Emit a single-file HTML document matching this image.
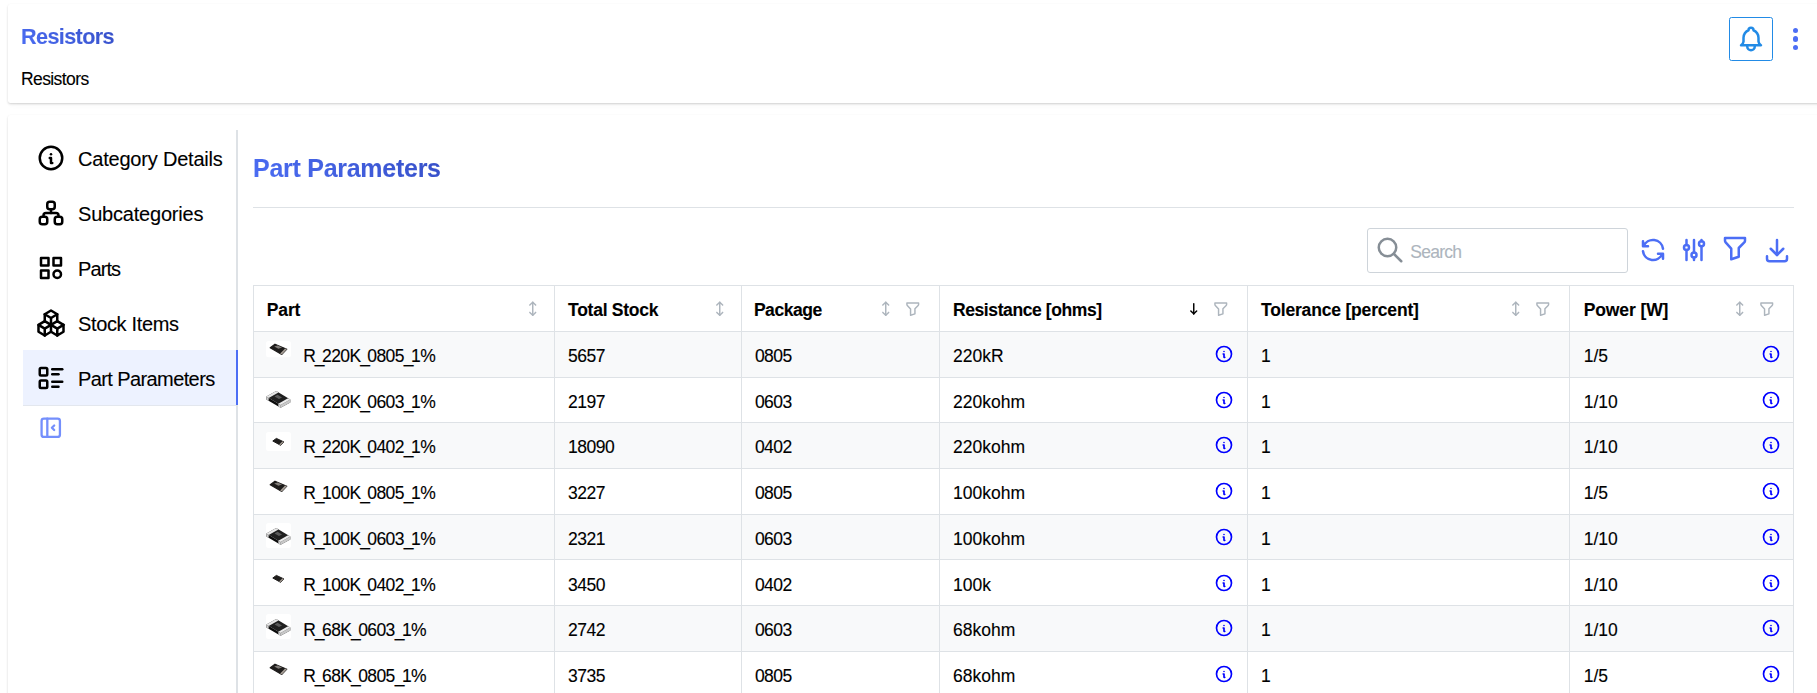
<!DOCTYPE html>
<html><head><meta charset="utf-8">
<style>
html,body{margin:0;padding:0;background:#fff;width:1817px;height:693px;overflow:hidden;}
body{font-family:"Liberation Sans",sans-serif;color:#000;position:relative;}
.a{position:absolute;}
.t{position:absolute;white-space:nowrap;line-height:1;-webkit-text-stroke-width:0.12px;}
.card{position:absolute;background:#fff;border-radius:2.5px;box-shadow:0 1px 3px rgba(0,0,0,.07),0 1px 2px rgba(0,0,0,.1),0 4px 6px -2px rgba(0,0,0,.035);}
.grad{background-image:linear-gradient(45deg,#4c6ef5,#364fc7);-webkit-background-clip:text;background-clip:text;color:transparent;}
svg{position:absolute;overflow:visible;}
.nav{font-size:20px;letter-spacing:-0.2px;}
.hline{position:absolute;background:#dee2e6;}
.th{font-weight:700;font-size:17.5px;}
.td{font-size:17.5px;}
</style></head>
<body>
<!-- header card -->
<div class="card" style="left:7.5px;top:3.5px;width:1850px;height:99.5px;"></div>
<div class="t grad" style="left:21px;top:25.5px;font-size:21.6px;font-weight:700;letter-spacing:-0.6px;padding-bottom:4px">Resistors</div>
<div class="t" style="left:21px;top:70.8px;font-size:17.5px;letter-spacing:-0.6px">Resistors</div>

<!-- bell -->
<div class="a" style="left:1729px;top:17px;width:42px;height:42px;border:1.25px solid #228be6;border-radius:2.5px;"></div>
<svg style="left:1736px;top:24px" width="30" height="30" viewBox="0 0 24 24" fill="none" stroke="#228be6" stroke-width="2" stroke-linecap="round" stroke-linejoin="round"><path d="M10 5a2 2 0 1 1 4 0a7 7 0 0 1 4 6v3a4 4 0 0 0 2 3h-16a4 4 0 0 0 2 -3v-3a7 7 0 0 1 4 -6"/><path d="M9 17v1a3 3 0 0 0 6 0v-1"/></svg>
<!-- dots -->
<div class="a" style="left:1793.1px;top:27.8px;width:5.2px;height:5.2px;border-radius:50%;background:#4c6ef5"></div>
<div class="a" style="left:1793.1px;top:36.4px;width:5.2px;height:5.2px;border-radius:50%;background:#4c6ef5"></div>
<div class="a" style="left:1793.1px;top:45.1px;width:5.2px;height:5.2px;border-radius:50%;background:#4c6ef5"></div>

<!-- main card -->
<div class="card" style="left:7.5px;top:115px;width:1850px;height:700px;"></div>

<!-- sidebar divider -->
<div class="hline" style="left:236px;top:130px;width:2px;height:600px;"></div>
<!-- active tab -->
<div class="a" style="left:23px;top:350px;width:213px;height:55px;background:#edf2ff;"></div>
<div class="a" style="left:236px;top:350px;width:2px;height:55px;background:#4c6ef5;"></div>
<div class="a" style="left:23px;top:405px;width:213px;height:1px;background:#e3e7ee;"></div>

<!-- nav icons -->
<svg style="left:35.75px;top:143px" width="30" height="30" viewBox="0 0 24 24" fill="none" stroke="#000" stroke-width="2" stroke-linecap="round" stroke-linejoin="round"><path d="M3 12a9 9 0 1 0 18 0a9 9 0 0 0 -18 0"/><path d="M12 9h.01"/><path d="M11 12h1v4h1"/></svg>
<svg style="left:35.75px;top:198px" width="30" height="30" viewBox="0 0 24 24" fill="none" stroke="#000" stroke-width="2" stroke-linecap="round" stroke-linejoin="round"><path d="M3 15m0 2a2 2 0 0 1 2 -2h2a2 2 0 0 1 2 2v2a2 2 0 0 1 -2 2h-2a2 2 0 0 1 -2 -2z"/><path d="M15 15m0 2a2 2 0 0 1 2 -2h2a2 2 0 0 1 2 2v2a2 2 0 0 1 -2 2h-2a2 2 0 0 1 -2 -2z"/><path d="M9 3m0 2a2 2 0 0 1 2 -2h2a2 2 0 0 1 2 2v2a2 2 0 0 1 -2 2h-2a2 2 0 0 1 -2 -2z"/><path d="M6 15v-1a2 2 0 0 1 2 -2h8a2 2 0 0 1 2 2v1"/><path d="M12 9l0 3"/></svg>
<svg style="left:35.75px;top:253px" width="30" height="30" viewBox="0 0 24 24" fill="none" stroke="#000" stroke-width="2" stroke-linecap="round" stroke-linejoin="round"><path d="M4 4h6v6h-6z"/><path d="M14 4h6v6h-6z"/><path d="M4 14h6v6h-6z"/><path d="M17 17m-3 0a3 3 0 1 0 6 0a3 3 0 1 0 -6 0"/></svg>
<svg style="left:35.75px;top:308px" width="30" height="30" viewBox="0 0 24 24" fill="none" stroke="#000" stroke-width="2" stroke-linecap="round" stroke-linejoin="round"><path d="M7 16.5l-5 -3l5 -3l5 3v5.5l-5 3z"/><path d="M2 13.5v5.5l5 3"/><path d="M7 16.545l5 -3.03"/><path d="M17 16.5l-5 -3l5 -3l5 3v5.5l-5 3z"/><path d="M12 19l5 3"/><path d="M17 16.5l5 -3"/><path d="M12 13.5v-5.5l-5 -3l5 -3l5 3v5.5"/><path d="M7 5.03v5.455"/><path d="M12 8l5 -3"/></svg>
<svg style="left:35.75px;top:363px" width="30" height="30" viewBox="0 0 24 24" fill="none" stroke="#000" stroke-width="2" stroke-linecap="round" stroke-linejoin="round"><path d="M13 5h8"/><path d="M13 9h5"/><path d="M13 15h8"/><path d="M13 19h5"/><path d="M3 4m0 1a1 1 0 0 1 1 -1h4a1 1 0 0 1 1 1v4a1 1 0 0 1 -1 1h-4a1 1 0 0 1 -1 -1z"/><path d="M3 14m0 1a1 1 0 0 1 1 -1h4a1 1 0 0 1 1 1v4a1 1 0 0 1 -1 1h-4a1 1 0 0 1 -1 -1z"/></svg>
<!-- collapse icon -->
<svg style="left:37.35px;top:414px" width="27.5" height="27.5" viewBox="0 0 24 24" fill="none" stroke="#748ffc" stroke-width="2" stroke-linecap="round" stroke-linejoin="round"><path d="M4 4m0 2a2 2 0 0 1 2 -2h12a2 2 0 0 1 2 2v12a2 2 0 0 1 -2 2h-12a2 2 0 0 1 -2 -2z"/><path d="M9 4v16"/><path d="M15 10l-2 2l2 2"/></svg>

<div class="t nav" style="left:78px;top:149px">Category Details</div>
<div class="t nav" style="left:78px;top:204px">Subcategories</div>
<div class="t nav" style="left:78px;top:259px;letter-spacing:-0.9px">Parts</div>
<div class="t nav" style="left:78px;top:314px;letter-spacing:-0.35px">Stock Items</div>
<div class="t nav" style="left:78px;top:369px;letter-spacing:-0.6px">Part Parameters</div>

<!-- panel heading -->
<div class="t grad" style="left:253px;top:155.5px;font-size:25px;font-weight:700;padding-bottom:5px;letter-spacing:-0.27px">Part Parameters</div>
<div class="hline" style="left:253px;top:207px;width:1541px;height:1.25px;"></div>

<!-- toolbar -->
<div class="a" style="left:1367px;top:228px;width:259px;height:42.7px;border:1.25px solid #ced4da;border-radius:3px;"></div>
<svg style="left:1375px;top:235px" width="30" height="30" viewBox="0 0 24 24" fill="none" stroke="#868e96" stroke-width="2" stroke-linecap="round" stroke-linejoin="round"><path d="M10 10m-7 0a7 7 0 1 0 14 0a7 7 0 1 0 -14 0"/><path d="M21 21l-6 -6"/></svg>
<div class="t" style="left:1410.3px;top:243.7px;font-size:17.5px;color:#adb5bd;letter-spacing:-0.75px">Search</div>

<svg style="left:1638px;top:235px" width="30" height="30" viewBox="0 0 24 24" fill="none" stroke="#4c6ef5" stroke-width="2" stroke-linecap="round" stroke-linejoin="round"><path d="M20 11a8.1 8.1 0 0 0 -15.5 -2m-.5 -4v4h4"/><path d="M4 13a8.1 8.1 0 0 0 15.5 2m.5 4v-4h-4"/></svg>
<svg style="left:1679px;top:235px" width="30" height="30" viewBox="0 0 24 24" fill="none" stroke="#4c6ef5" stroke-width="2" stroke-linecap="round" stroke-linejoin="round"><path d="M4 10a2 2 0 1 0 4 0a2 2 0 0 0 -4 0"/><path d="M6 4v4"/><path d="M6 12v8"/><path d="M10 16a2 2 0 1 0 4 0a2 2 0 0 0 -4 0"/><path d="M12 4v10"/><path d="M12 18v2"/><path d="M16 7a2 2 0 1 0 4 0a2 2 0 0 0 -4 0"/><path d="M18 4v1"/><path d="M18 9v11"/></svg>
<svg style="left:1720px;top:233.1px" width="30" height="30" viewBox="0 0 24 24" fill="none" stroke="#4c6ef5" stroke-width="2" stroke-linecap="round" stroke-linejoin="round"><path d="M4 4h16v2.172a2 2 0 0 1 -.586 1.414l-4.414 4.414v7l-6 2v-8.5l-4.48 -4.928a2 2 0 0 1 -.52 -1.345v-2.227z"/></svg>
<svg style="left:1762px;top:235px" width="30" height="30" viewBox="0 0 24 24" fill="none" stroke="#4c6ef5" stroke-width="2" stroke-linecap="round" stroke-linejoin="round"><path d="M4 17v2a2 2 0 0 0 2 2h12a2 2 0 0 0 2 -2v-2"/><path d="M7 11l5 5l5 -5"/><path d="M12 4l0 12"/></svg>

<!-- TABLE -->
<div class="a" style="left:254px;top:332px;width:1539px;height:45px;background:#f8f9fa"></div>
<div class="a" style="left:254px;top:423px;width:1539px;height:45px;background:#f8f9fa"></div>
<div class="a" style="left:254px;top:515px;width:1539px;height:44px;background:#f8f9fa"></div>
<div class="a" style="left:254px;top:606px;width:1539px;height:45px;background:#f8f9fa"></div>
<div class="hline" style="left:253px;top:285px;width:1541px;height:1px"></div>
<div class="hline" style="left:253px;top:331px;width:1541px;height:1px"></div>
<div class="hline" style="left:253px;top:377px;width:1541px;height:1px"></div>
<div class="hline" style="left:253px;top:422px;width:1541px;height:1px"></div>
<div class="hline" style="left:253px;top:468px;width:1541px;height:1px"></div>
<div class="hline" style="left:253px;top:514px;width:1541px;height:1px"></div>
<div class="hline" style="left:253px;top:559px;width:1541px;height:1px"></div>
<div class="hline" style="left:253px;top:605px;width:1541px;height:1px"></div>
<div class="hline" style="left:253px;top:651px;width:1541px;height:1px"></div>
<div class="hline" style="left:253px;top:285px;width:1px;height:420px"></div>
<div class="hline" style="left:554px;top:285px;width:1px;height:420px"></div>
<div class="hline" style="left:741px;top:285px;width:1px;height:420px"></div>
<div class="hline" style="left:939px;top:285px;width:1px;height:420px"></div>
<div class="hline" style="left:1247px;top:285px;width:1px;height:420px"></div>
<div class="hline" style="left:1569px;top:285px;width:1px;height:420px"></div>
<div class="hline" style="left:1793px;top:285px;width:1px;height:420px"></div>
<div class="t th" style="left:266.7px;top:302.09px;letter-spacing:-0.1px">Part</div>
<div class="t th" style="left:568px;top:302.09px;letter-spacing:-0.25px">Total Stock</div>
<div class="t th" style="left:753.9px;top:302.09px;letter-spacing:-0.44px">Package</div>
<div class="t th" style="left:953px;top:302.09px;letter-spacing:-0.41px">Resistance [ohms]</div>
<div class="t th" style="left:1261px;top:302.09px;letter-spacing:-0.18px">Tolerance [percent]</div>
<div class="t th" style="left:1583.7px;top:302.09px;letter-spacing:-0.1px">Power [W]</div>
<svg style="left:524.05px;top:299.65px" width="17.5" height="17.5" viewBox="0 0 24 24" fill="none" stroke="#adb5bd" stroke-width="2" stroke-linecap="round" stroke-linejoin="round"><path d="M8 7l4 -4l4 4"/><path d="M8 17l4 4l4 -4"/><path d="M12 3l0 18"/></svg>
<svg style="left:710.85px;top:299.65px" width="17.5" height="17.5" viewBox="0 0 24 24" fill="none" stroke="#adb5bd" stroke-width="2" stroke-linecap="round" stroke-linejoin="round"><path d="M8 7l4 -4l4 4"/><path d="M8 17l4 4l4 -4"/><path d="M12 3l0 18"/></svg>
<svg style="left:876.55px;top:299.65px" width="17.5" height="17.5" viewBox="0 0 24 24" fill="none" stroke="#adb5bd" stroke-width="2" stroke-linecap="round" stroke-linejoin="round"><path d="M8 7l4 -4l4 4"/><path d="M8 17l4 4l4 -4"/><path d="M12 3l0 18"/></svg>
<svg style="left:903.55px;top:299.65px" width="17.5" height="17.5" viewBox="0 0 24 24" fill="none" stroke="#adb5bd" stroke-width="2" stroke-linecap="round" stroke-linejoin="round"><path d="M4 4h16v2.172a2 2 0 0 1 -.586 1.414l-4.414 4.414v7l-6 2v-8.5l-4.48 -4.928a2 2 0 0 1 -.52 -1.345v-2.227z"/></svg>
<svg style="left:1184.85px;top:299.65px" width="17.5" height="17.5" viewBox="0 0 24 24" fill="none" stroke="#000" stroke-width="2" stroke-linecap="round" stroke-linejoin="round"><path d="M12 5l0 14"/><path d="M16 15l-4 4"/><path d="M8 15l4 4"/></svg>
<svg style="left:1211.85px;top:299.65px" width="17.5" height="17.5" viewBox="0 0 24 24" fill="none" stroke="#adb5bd" stroke-width="2" stroke-linecap="round" stroke-linejoin="round"><path d="M4 4h16v2.172a2 2 0 0 1 -.586 1.414l-4.414 4.414v7l-6 2v-8.5l-4.48 -4.928a2 2 0 0 1 -.52 -1.345v-2.227z"/></svg>
<svg style="left:1506.65px;top:299.65px" width="17.5" height="17.5" viewBox="0 0 24 24" fill="none" stroke="#adb5bd" stroke-width="2" stroke-linecap="round" stroke-linejoin="round"><path d="M8 7l4 -4l4 4"/><path d="M8 17l4 4l4 -4"/><path d="M12 3l0 18"/></svg>
<svg style="left:1533.65px;top:299.65px" width="17.5" height="17.5" viewBox="0 0 24 24" fill="none" stroke="#adb5bd" stroke-width="2" stroke-linecap="round" stroke-linejoin="round"><path d="M4 4h16v2.172a2 2 0 0 1 -.586 1.414l-4.414 4.414v7l-6 2v-8.5l-4.48 -4.928a2 2 0 0 1 -.52 -1.345v-2.227z"/></svg>
<svg style="left:1730.75px;top:299.65px" width="17.5" height="17.5" viewBox="0 0 24 24" fill="none" stroke="#adb5bd" stroke-width="2" stroke-linecap="round" stroke-linejoin="round"><path d="M8 7l4 -4l4 4"/><path d="M8 17l4 4l4 -4"/><path d="M12 3l0 18"/></svg>
<svg style="left:1757.75px;top:299.65px" width="17.5" height="17.5" viewBox="0 0 24 24" fill="none" stroke="#adb5bd" stroke-width="2" stroke-linecap="round" stroke-linejoin="round"><path d="M4 4h16v2.172a2 2 0 0 1 -.586 1.414l-4.414 4.414v7l-6 2v-8.5l-4.48 -4.928a2 2 0 0 1 -.52 -1.345v-2.227z"/></svg>
<svg style="left:262px;top:331px" width="34" height="46" viewBox="262 0 34 46"><rect x="266" y="10" width="25" height="16.3" rx="2.5" fill="#fff"/><g stroke-linejoin="round"><polygon points="270.20,16.80 275.00,13.20 286.80,18.20 281.80,23.40" fill="#1e1c1b" stroke="#1e1c1b" stroke-width="1.2"/><polygon points="285.15,17.50 286.80,18.20 281.80,23.40 280.18,22.48" fill="#a8a098"/><polygon points="274.20,15.60 277.80,14.60 282.00,16.60 278.40,17.80" fill="#807c78"/></g></svg>
<div class="t td" style="left:303.2px;top:347.89px"><span style="letter-spacing:-1.0px">R</span><span style="letter-spacing:-2.5px">_</span><span style="letter-spacing:-0.62px">2</span><span style="letter-spacing:-0.62px">2</span><span style="letter-spacing:-0.62px">0</span><span style="letter-spacing:-1.0px">K</span><span style="letter-spacing:-2.5px">_</span><span style="letter-spacing:-0.62px">0</span><span style="letter-spacing:-0.62px">8</span><span style="letter-spacing:-0.62px">0</span><span style="letter-spacing:-0.62px">5</span><span style="letter-spacing:-2.5px">_</span><span style="letter-spacing:-0.62px">1</span><span style="letter-spacing:-1.5px">%</span></div>
<div class="t td" style="left:568px;top:347.89px;letter-spacing:-0.5px">5657</div>
<div class="t td" style="left:754.9px;top:347.89px;letter-spacing:-0.5px">0805</div>
<div class="t td" style="left:953px;top:347.89px;letter-spacing:0px">220kR</div>
<div class="t td" style="left:1261px;top:347.89px;letter-spacing:0px">1</div>
<div class="t td" style="left:1583.7px;top:347.89px;letter-spacing:0px">1/5</div>
<svg style="left:1214.00px;top:343.80px" width="20" height="20" viewBox="0 0 24 24" fill="none" stroke="#0000ff" stroke-width="2" stroke-linecap="round" stroke-linejoin="round"><path d="M3 12a9 9 0 1 0 18 0a9 9 0 0 0 -18 0"/><path d="M12 9h.01"/><path d="M11 12h1v4h1"/></svg>
<svg style="left:1761.00px;top:343.80px" width="20" height="20" viewBox="0 0 24 24" fill="none" stroke="#0000ff" stroke-width="2" stroke-linecap="round" stroke-linejoin="round"><path d="M3 12a9 9 0 1 0 18 0a9 9 0 0 0 -18 0"/><path d="M12 9h.01"/><path d="M11 12h1v4h1"/></svg>
<svg style="left:262px;top:377px" width="34" height="46" viewBox="262 0 34 46"><polygon points="266.40,19.60 276.20,14.00 290.30,22.60 280.60,28.00" fill="#1f1f1f"/><polygon points="266.40,19.60 280.60,28.00 280.60,30.80 266.40,22.40" fill="#0c0c0c"/><polygon points="280.60,28.00 290.30,22.60 290.30,25.40 280.60,30.80" fill="#2a2a2a"/><polygon points="266.40,19.60 276.20,14.00 278.46,15.38 268.67,20.94" fill="#e6e6e6"/><polygon points="266.40,19.60 268.67,20.94 268.67,23.74 266.40,22.40" fill="#cfcfcf"/><polygon points="278.33,26.66 288.04,21.22 290.30,22.60 280.60,28.00" fill="#ececec"/><polygon points="278.33,26.66 280.60,28.00 280.60,30.80 278.33,29.46" fill="#d4d4d4"/><polygon points="280.60,28.00 290.30,22.60 290.30,25.40 280.60,30.80" fill="#c8c8c8"/><polygon points="274.50,19.40 277.50,17.80 282.00,20.50 279.00,22.10" fill="#5a5a5a"/></svg>
<div class="t td" style="left:303.2px;top:393.64px"><span style="letter-spacing:-1.0px">R</span><span style="letter-spacing:-2.5px">_</span><span style="letter-spacing:-0.62px">2</span><span style="letter-spacing:-0.62px">2</span><span style="letter-spacing:-0.62px">0</span><span style="letter-spacing:-1.0px">K</span><span style="letter-spacing:-2.5px">_</span><span style="letter-spacing:-0.62px">0</span><span style="letter-spacing:-0.62px">6</span><span style="letter-spacing:-0.62px">0</span><span style="letter-spacing:-0.62px">3</span><span style="letter-spacing:-2.5px">_</span><span style="letter-spacing:-0.62px">1</span><span style="letter-spacing:-1.5px">%</span></div>
<div class="t td" style="left:568px;top:393.64px;letter-spacing:-0.5px">2197</div>
<div class="t td" style="left:754.9px;top:393.64px;letter-spacing:-0.5px">0603</div>
<div class="t td" style="left:953px;top:393.64px;letter-spacing:0px">220kohm</div>
<div class="t td" style="left:1261px;top:393.64px;letter-spacing:0px">1</div>
<div class="t td" style="left:1583.7px;top:393.64px;letter-spacing:0px">1/10</div>
<svg style="left:1214.00px;top:389.55px" width="20" height="20" viewBox="0 0 24 24" fill="none" stroke="#0000ff" stroke-width="2" stroke-linecap="round" stroke-linejoin="round"><path d="M3 12a9 9 0 1 0 18 0a9 9 0 0 0 -18 0"/><path d="M12 9h.01"/><path d="M11 12h1v4h1"/></svg>
<svg style="left:1761.00px;top:389.55px" width="20" height="20" viewBox="0 0 24 24" fill="none" stroke="#0000ff" stroke-width="2" stroke-linecap="round" stroke-linejoin="round"><path d="M3 12a9 9 0 1 0 18 0a9 9 0 0 0 -18 0"/><path d="M12 9h.01"/><path d="M11 12h1v4h1"/></svg>
<svg style="left:262px;top:422px" width="34" height="46" viewBox="262 0 34 46"><rect x="266" y="10" width="25" height="19" rx="2.5" fill="#fff"/><polygon points="272.80,19.00 276.40,16.40 284.00,20.00 280.60,23.30" fill="#1e1c1b" stroke="#1e1c1b" stroke-width="1" stroke-linejoin="round"/><polygon points="282.48,19.28 284.00,20.00 280.60,23.30 279.04,22.44" fill="#9c948c"/></svg>
<div class="t td" style="left:303.2px;top:439.39px"><span style="letter-spacing:-1.0px">R</span><span style="letter-spacing:-2.5px">_</span><span style="letter-spacing:-0.62px">2</span><span style="letter-spacing:-0.62px">2</span><span style="letter-spacing:-0.62px">0</span><span style="letter-spacing:-1.0px">K</span><span style="letter-spacing:-2.5px">_</span><span style="letter-spacing:-0.62px">0</span><span style="letter-spacing:-0.62px">4</span><span style="letter-spacing:-0.62px">0</span><span style="letter-spacing:-0.62px">2</span><span style="letter-spacing:-2.5px">_</span><span style="letter-spacing:-0.62px">1</span><span style="letter-spacing:-1.5px">%</span></div>
<div class="t td" style="left:568px;top:439.39px;letter-spacing:-0.5px">18090</div>
<div class="t td" style="left:754.9px;top:439.39px;letter-spacing:-0.5px">0402</div>
<div class="t td" style="left:953px;top:439.39px;letter-spacing:0px">220kohm</div>
<div class="t td" style="left:1261px;top:439.39px;letter-spacing:0px">1</div>
<div class="t td" style="left:1583.7px;top:439.39px;letter-spacing:0px">1/10</div>
<svg style="left:1214.00px;top:435.30px" width="20" height="20" viewBox="0 0 24 24" fill="none" stroke="#0000ff" stroke-width="2" stroke-linecap="round" stroke-linejoin="round"><path d="M3 12a9 9 0 1 0 18 0a9 9 0 0 0 -18 0"/><path d="M12 9h.01"/><path d="M11 12h1v4h1"/></svg>
<svg style="left:1761.00px;top:435.30px" width="20" height="20" viewBox="0 0 24 24" fill="none" stroke="#0000ff" stroke-width="2" stroke-linecap="round" stroke-linejoin="round"><path d="M3 12a9 9 0 1 0 18 0a9 9 0 0 0 -18 0"/><path d="M12 9h.01"/><path d="M11 12h1v4h1"/></svg>
<svg style="left:262px;top:468px" width="34" height="46" viewBox="262 0 34 46"><g stroke-linejoin="round"><polygon points="270.20,16.80 275.00,13.20 286.80,18.20 281.80,23.40" fill="#1e1c1b" stroke="#1e1c1b" stroke-width="1.2"/><polygon points="285.15,17.50 286.80,18.20 281.80,23.40 280.18,22.48" fill="#a8a098"/><polygon points="274.20,15.60 277.80,14.60 282.00,16.60 278.40,17.80" fill="#807c78"/></g></svg>
<div class="t td" style="left:303.2px;top:485.14px"><span style="letter-spacing:-1.0px">R</span><span style="letter-spacing:-2.5px">_</span><span style="letter-spacing:-0.62px">1</span><span style="letter-spacing:-0.62px">0</span><span style="letter-spacing:-0.62px">0</span><span style="letter-spacing:-1.0px">K</span><span style="letter-spacing:-2.5px">_</span><span style="letter-spacing:-0.62px">0</span><span style="letter-spacing:-0.62px">8</span><span style="letter-spacing:-0.62px">0</span><span style="letter-spacing:-0.62px">5</span><span style="letter-spacing:-2.5px">_</span><span style="letter-spacing:-0.62px">1</span><span style="letter-spacing:-1.5px">%</span></div>
<div class="t td" style="left:568px;top:485.14px;letter-spacing:-0.5px">3227</div>
<div class="t td" style="left:754.9px;top:485.14px;letter-spacing:-0.5px">0805</div>
<div class="t td" style="left:953px;top:485.14px;letter-spacing:0px">100kohm</div>
<div class="t td" style="left:1261px;top:485.14px;letter-spacing:0px">1</div>
<div class="t td" style="left:1583.7px;top:485.14px;letter-spacing:0px">1/5</div>
<svg style="left:1214.00px;top:481.05px" width="20" height="20" viewBox="0 0 24 24" fill="none" stroke="#0000ff" stroke-width="2" stroke-linecap="round" stroke-linejoin="round"><path d="M3 12a9 9 0 1 0 18 0a9 9 0 0 0 -18 0"/><path d="M12 9h.01"/><path d="M11 12h1v4h1"/></svg>
<svg style="left:1761.00px;top:481.05px" width="20" height="20" viewBox="0 0 24 24" fill="none" stroke="#0000ff" stroke-width="2" stroke-linecap="round" stroke-linejoin="round"><path d="M3 12a9 9 0 1 0 18 0a9 9 0 0 0 -18 0"/><path d="M12 9h.01"/><path d="M11 12h1v4h1"/></svg>
<svg style="left:262px;top:514px" width="34" height="46" viewBox="262 0 34 46"><rect x="266" y="9" width="25" height="25" rx="2.5" fill="#fff"/><polygon points="266.40,19.60 276.20,14.00 290.30,22.60 280.60,28.00" fill="#1f1f1f"/><polygon points="266.40,19.60 280.60,28.00 280.60,30.80 266.40,22.40" fill="#0c0c0c"/><polygon points="280.60,28.00 290.30,22.60 290.30,25.40 280.60,30.80" fill="#2a2a2a"/><polygon points="266.40,19.60 276.20,14.00 278.46,15.38 268.67,20.94" fill="#e6e6e6"/><polygon points="266.40,19.60 268.67,20.94 268.67,23.74 266.40,22.40" fill="#cfcfcf"/><polygon points="278.33,26.66 288.04,21.22 290.30,22.60 280.60,28.00" fill="#ececec"/><polygon points="278.33,26.66 280.60,28.00 280.60,30.80 278.33,29.46" fill="#d4d4d4"/><polygon points="280.60,28.00 290.30,22.60 290.30,25.40 280.60,30.80" fill="#c8c8c8"/><polygon points="274.50,19.40 277.50,17.80 282.00,20.50 279.00,22.10" fill="#5a5a5a"/></svg>
<div class="t td" style="left:303.2px;top:530.89px"><span style="letter-spacing:-1.0px">R</span><span style="letter-spacing:-2.5px">_</span><span style="letter-spacing:-0.62px">1</span><span style="letter-spacing:-0.62px">0</span><span style="letter-spacing:-0.62px">0</span><span style="letter-spacing:-1.0px">K</span><span style="letter-spacing:-2.5px">_</span><span style="letter-spacing:-0.62px">0</span><span style="letter-spacing:-0.62px">6</span><span style="letter-spacing:-0.62px">0</span><span style="letter-spacing:-0.62px">3</span><span style="letter-spacing:-2.5px">_</span><span style="letter-spacing:-0.62px">1</span><span style="letter-spacing:-1.5px">%</span></div>
<div class="t td" style="left:568px;top:530.89px;letter-spacing:-0.5px">2321</div>
<div class="t td" style="left:754.9px;top:530.89px;letter-spacing:-0.5px">0603</div>
<div class="t td" style="left:953px;top:530.89px;letter-spacing:0px">100kohm</div>
<div class="t td" style="left:1261px;top:530.89px;letter-spacing:0px">1</div>
<div class="t td" style="left:1583.7px;top:530.89px;letter-spacing:0px">1/10</div>
<svg style="left:1214.00px;top:526.80px" width="20" height="20" viewBox="0 0 24 24" fill="none" stroke="#0000ff" stroke-width="2" stroke-linecap="round" stroke-linejoin="round"><path d="M3 12a9 9 0 1 0 18 0a9 9 0 0 0 -18 0"/><path d="M12 9h.01"/><path d="M11 12h1v4h1"/></svg>
<svg style="left:1761.00px;top:526.80px" width="20" height="20" viewBox="0 0 24 24" fill="none" stroke="#0000ff" stroke-width="2" stroke-linecap="round" stroke-linejoin="round"><path d="M3 12a9 9 0 1 0 18 0a9 9 0 0 0 -18 0"/><path d="M12 9h.01"/><path d="M11 12h1v4h1"/></svg>
<svg style="left:262px;top:559px" width="34" height="46" viewBox="262 0 34 46"><polygon points="272.80,19.00 276.40,16.40 284.00,20.00 280.60,23.30" fill="#1e1c1b" stroke="#1e1c1b" stroke-width="1" stroke-linejoin="round"/><polygon points="282.48,19.28 284.00,20.00 280.60,23.30 279.04,22.44" fill="#9c948c"/></svg>
<div class="t td" style="left:303.2px;top:576.64px"><span style="letter-spacing:-1.0px">R</span><span style="letter-spacing:-2.5px">_</span><span style="letter-spacing:-0.62px">1</span><span style="letter-spacing:-0.62px">0</span><span style="letter-spacing:-0.62px">0</span><span style="letter-spacing:-1.0px">K</span><span style="letter-spacing:-2.5px">_</span><span style="letter-spacing:-0.62px">0</span><span style="letter-spacing:-0.62px">4</span><span style="letter-spacing:-0.62px">0</span><span style="letter-spacing:-0.62px">2</span><span style="letter-spacing:-2.5px">_</span><span style="letter-spacing:-0.62px">1</span><span style="letter-spacing:-1.5px">%</span></div>
<div class="t td" style="left:568px;top:576.64px;letter-spacing:-0.5px">3450</div>
<div class="t td" style="left:754.9px;top:576.64px;letter-spacing:-0.5px">0402</div>
<div class="t td" style="left:953px;top:576.64px;letter-spacing:0px">100k</div>
<div class="t td" style="left:1261px;top:576.64px;letter-spacing:0px">1</div>
<div class="t td" style="left:1583.7px;top:576.64px;letter-spacing:0px">1/10</div>
<svg style="left:1214.00px;top:572.55px" width="20" height="20" viewBox="0 0 24 24" fill="none" stroke="#0000ff" stroke-width="2" stroke-linecap="round" stroke-linejoin="round"><path d="M3 12a9 9 0 1 0 18 0a9 9 0 0 0 -18 0"/><path d="M12 9h.01"/><path d="M11 12h1v4h1"/></svg>
<svg style="left:1761.00px;top:572.55px" width="20" height="20" viewBox="0 0 24 24" fill="none" stroke="#0000ff" stroke-width="2" stroke-linecap="round" stroke-linejoin="round"><path d="M3 12a9 9 0 1 0 18 0a9 9 0 0 0 -18 0"/><path d="M12 9h.01"/><path d="M11 12h1v4h1"/></svg>
<svg style="left:262px;top:605px" width="34" height="46" viewBox="262 0 34 46"><rect x="266" y="9" width="25" height="25" rx="2.5" fill="#fff"/><polygon points="266.40,19.60 276.20,14.00 290.30,22.60 280.60,28.00" fill="#1f1f1f"/><polygon points="266.40,19.60 280.60,28.00 280.60,30.80 266.40,22.40" fill="#0c0c0c"/><polygon points="280.60,28.00 290.30,22.60 290.30,25.40 280.60,30.80" fill="#2a2a2a"/><polygon points="266.40,19.60 276.20,14.00 278.46,15.38 268.67,20.94" fill="#e6e6e6"/><polygon points="266.40,19.60 268.67,20.94 268.67,23.74 266.40,22.40" fill="#cfcfcf"/><polygon points="278.33,26.66 288.04,21.22 290.30,22.60 280.60,28.00" fill="#ececec"/><polygon points="278.33,26.66 280.60,28.00 280.60,30.80 278.33,29.46" fill="#d4d4d4"/><polygon points="280.60,28.00 290.30,22.60 290.30,25.40 280.60,30.80" fill="#c8c8c8"/><polygon points="274.50,19.40 277.50,17.80 282.00,20.50 279.00,22.10" fill="#5a5a5a"/></svg>
<div class="t td" style="left:303.2px;top:622.39px"><span style="letter-spacing:-1.0px">R</span><span style="letter-spacing:-2.5px">_</span><span style="letter-spacing:-0.62px">6</span><span style="letter-spacing:-0.62px">8</span><span style="letter-spacing:-1.0px">K</span><span style="letter-spacing:-2.5px">_</span><span style="letter-spacing:-0.62px">0</span><span style="letter-spacing:-0.62px">6</span><span style="letter-spacing:-0.62px">0</span><span style="letter-spacing:-0.62px">3</span><span style="letter-spacing:-2.5px">_</span><span style="letter-spacing:-0.62px">1</span><span style="letter-spacing:-1.5px">%</span></div>
<div class="t td" style="left:568px;top:622.39px;letter-spacing:-0.5px">2742</div>
<div class="t td" style="left:754.9px;top:622.39px;letter-spacing:-0.5px">0603</div>
<div class="t td" style="left:953px;top:622.39px;letter-spacing:0px">68kohm</div>
<div class="t td" style="left:1261px;top:622.39px;letter-spacing:0px">1</div>
<div class="t td" style="left:1583.7px;top:622.39px;letter-spacing:0px">1/10</div>
<svg style="left:1214.00px;top:618.30px" width="20" height="20" viewBox="0 0 24 24" fill="none" stroke="#0000ff" stroke-width="2" stroke-linecap="round" stroke-linejoin="round"><path d="M3 12a9 9 0 1 0 18 0a9 9 0 0 0 -18 0"/><path d="M12 9h.01"/><path d="M11 12h1v4h1"/></svg>
<svg style="left:1761.00px;top:618.30px" width="20" height="20" viewBox="0 0 24 24" fill="none" stroke="#0000ff" stroke-width="2" stroke-linecap="round" stroke-linejoin="round"><path d="M3 12a9 9 0 1 0 18 0a9 9 0 0 0 -18 0"/><path d="M12 9h.01"/><path d="M11 12h1v4h1"/></svg>
<svg style="left:262px;top:651px" width="34" height="46" viewBox="262 0 34 46"><g stroke-linejoin="round"><polygon points="270.20,16.80 275.00,13.20 286.80,18.20 281.80,23.40" fill="#1e1c1b" stroke="#1e1c1b" stroke-width="1.2"/><polygon points="285.15,17.50 286.80,18.20 281.80,23.40 280.18,22.48" fill="#a8a098"/><polygon points="274.20,15.60 277.80,14.60 282.00,16.60 278.40,17.80" fill="#807c78"/></g></svg>
<div class="t td" style="left:303.2px;top:668.14px"><span style="letter-spacing:-1.0px">R</span><span style="letter-spacing:-2.5px">_</span><span style="letter-spacing:-0.62px">6</span><span style="letter-spacing:-0.62px">8</span><span style="letter-spacing:-1.0px">K</span><span style="letter-spacing:-2.5px">_</span><span style="letter-spacing:-0.62px">0</span><span style="letter-spacing:-0.62px">8</span><span style="letter-spacing:-0.62px">0</span><span style="letter-spacing:-0.62px">5</span><span style="letter-spacing:-2.5px">_</span><span style="letter-spacing:-0.62px">1</span><span style="letter-spacing:-1.5px">%</span></div>
<div class="t td" style="left:568px;top:668.14px;letter-spacing:-0.5px">3735</div>
<div class="t td" style="left:754.9px;top:668.14px;letter-spacing:-0.5px">0805</div>
<div class="t td" style="left:953px;top:668.14px;letter-spacing:0px">68kohm</div>
<div class="t td" style="left:1261px;top:668.14px;letter-spacing:0px">1</div>
<div class="t td" style="left:1583.7px;top:668.14px;letter-spacing:0px">1/5</div>
<svg style="left:1214.00px;top:664.05px" width="20" height="20" viewBox="0 0 24 24" fill="none" stroke="#0000ff" stroke-width="2" stroke-linecap="round" stroke-linejoin="round"><path d="M3 12a9 9 0 1 0 18 0a9 9 0 0 0 -18 0"/><path d="M12 9h.01"/><path d="M11 12h1v4h1"/></svg>
<svg style="left:1761.00px;top:664.05px" width="20" height="20" viewBox="0 0 24 24" fill="none" stroke="#0000ff" stroke-width="2" stroke-linecap="round" stroke-linejoin="round"><path d="M3 12a9 9 0 1 0 18 0a9 9 0 0 0 -18 0"/><path d="M12 9h.01"/><path d="M11 12h1v4h1"/></svg>
</body></html>
